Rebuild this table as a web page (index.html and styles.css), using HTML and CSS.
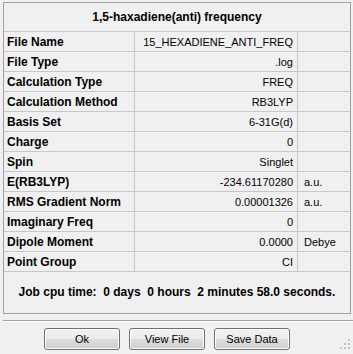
FILE: index.html
```html
<!DOCTYPE html>
<html lang="en">
<head>
  <meta charset="UTF-8" />
  <meta name="viewport" content="width=device-width, initial-scale=1.0"/>
  <title>1,5-haxadiene(anti) frequency</title>
  <link rel="stylesheet" href="styles.css">
</head>
<body>
  <div class="frame">
    <div class="grid">
      <div class="title">1,5-haxadiene(anti) frequency</div>

      <div class="label">File Name</div>
      <div class="value">15_HEXADIENE_ANTI_FREQ</div>
      <div class="unit"></div>

      <div class="label">File Type</div>
      <div class="value">.log</div>
      <div class="unit"></div>

      <div class="label">Calculation Type</div>
      <div class="value">FREQ</div>
      <div class="unit"></div>

      <div class="label">Calculation Method</div>
      <div class="value">RB3LYP</div>
      <div class="unit"></div>

      <div class="label">Basis Set</div>
      <div class="value">6-31G(d)</div>
      <div class="unit"></div>

      <div class="label">Charge</div>
      <div class="value">0</div>
      <div class="unit"></div>

      <div class="label">Spin</div>
      <div class="value">Singlet</div>
      <div class="unit"></div>

      <div class="label">E(RB3LYP)</div>
      <div class="value">-234.61170280</div>
      <div class="unit">a.u.</div>

      <div class="label">RMS Gradient Norm</div>
      <div class="value">0.00001326</div>
      <div class="unit">a.u.</div>

      <div class="label">Imaginary Freq</div>
      <div class="value">0</div>
      <div class="unit"></div>

      <div class="label">Dipole Moment</div>
      <div class="value">0.0000</div>
      <div class="unit">Debye</div>

      <div class="label">Point Group</div>
      <div class="value">CI</div>
      <div class="unit"></div>
    </div>
    <div class="cpu">Job cpu time:  0 days  0 hours  2 minutes 58.0 seconds.</div>
  </div>

  <div class="separator"></div>

  <div class="buttons">
    <button>Ok</button>
    <button>View File</button>
    <button>Save Data</button>
  </div>

  <!-- size grip in the window corner -->
  <svg class="grip" width="12" height="12" viewBox="0 0 12 12">
    <rect x="9" y="1" width="2" height="2" fill="#c4c4c4"/>
    <rect x="5" y="5" width="2" height="2" fill="#c4c4c4"/>
    <rect x="9" y="5" width="2" height="2" fill="#c4c4c4"/>
    <rect x="1" y="9" width="2" height="2" fill="#c4c4c4"/>
    <rect x="5" y="9" width="2" height="2" fill="#c4c4c4"/>
    <rect x="9" y="9" width="2" height="2" fill="#c4c4c4"/>
  </svg>
</body>
</html>
```

FILE: styles.css
```css
body {
  margin: 0;
  width: 353px;
  height: 354px;
  background: #f0f0f0;
  font-family: "Liberation Sans", Arial, sans-serif;
  font-size: 11px;
  color: #000;
  position: relative;
  overflow: hidden;
}

.frame {
  margin: 2px 2px 0 3px;
  width: 346px;
  height: 310px;
  border: 1px solid #a0a0a0;
}

.grid {
  display: grid;
  grid-template-columns: 130px 162px 52px;
  grid-template-rows: 28px;
  grid-auto-rows: 19px;
  gap: 1px;
  background: #c8c8c8;
  border-bottom: 1px solid #c8c8c8;
}

.grid > div {
  background: #f0f0f0;
  display: flex;
  align-items: center;
  white-space: nowrap;
}

.title {
  grid-column: 1 / 4;
  justify-content: center;
  font-weight: bold;
  font-size: 12px;
}

.label {
  padding-left: 3px;
  font-weight: bold;
  font-size: 12px;
}

.value {
  justify-content: flex-end;
  padding-right: 4px;
}

.unit {
  padding-left: 6px;
}

.cpu {
  height: 40px;
  display: flex;
  align-items: center;
  justify-content: center;
  font-weight: bold;
  font-size: 12px;
  white-space: pre;
}

.separator {
  margin: 6px 0 0 3px;
  height: 1px;
  background: #a0a0a0;
  border-bottom: 1px solid #fff;
}

.buttons {
  display: flex;
  gap: 9px;
  padding: 6px 0 0 44px;
}

.buttons button {
  width: 76px;
  height: 22px;
  padding: 0;
  font-family: "Liberation Sans", Arial, sans-serif;
  font-size: 11px;
  color: #000;
  border: 1px solid #707070;
  border-radius: 3px;
  box-shadow: inset 0 0 0 1px #fcfcfc;
  background: linear-gradient(#f2f2f2 0%, #ebebeb 50%, #dddddd 50%, #cfcfcf 100%);
}

.grip {
  position: absolute;
  right: 2px;
  bottom: 4px;
}
```
